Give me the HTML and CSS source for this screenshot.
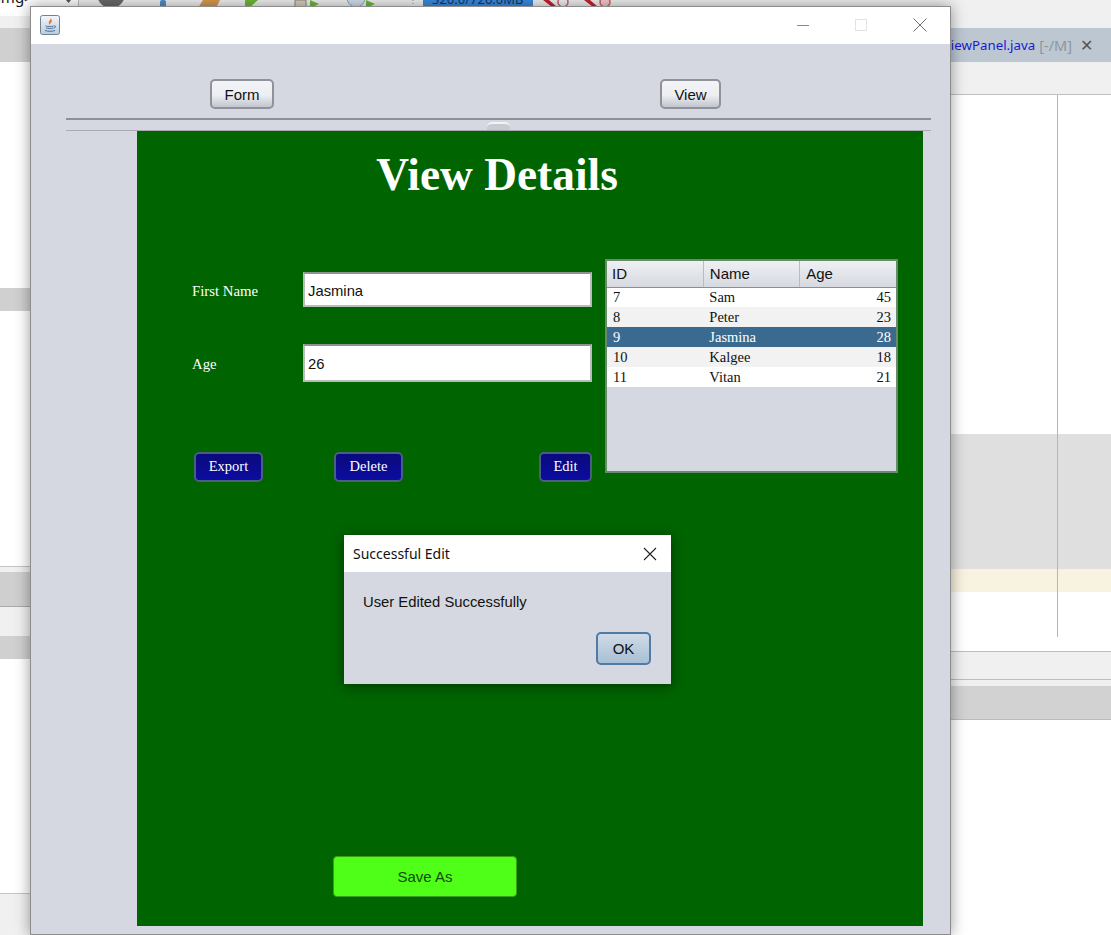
FILE: index.html
```html
<!DOCTYPE html>
<html lang="en">
<head>
    <meta charset="UTF-8">
    <title>View Details</title>
    <link rel="stylesheet" href="styles.css">
</head>
<body>
    <!-- IDE behind the window -->
    <div class="ide">
        <svg class="toolbar" width="1111" height="8" viewBox="0 0 1111 8">
            <rect width="78" height="8" fill="#ffffff"/>
            <text x="-3" y="3" class="tool-text">img&gt;</text>
            <path d="M66 0h5l-2.500 3z" fill="#555"/>
            <rect x="78" width="1" height="8" fill="#bbb"/>
            <circle cx="111" cy="-6" r="14" fill="#6a6a6a"/>
            <rect x="160" width="6" height="8" rx="2" fill="#4a90d0"/>
            <path d="M198 8l5-8h17l-4 8z" fill="#d99a50"/>
            <path d="M245 0h13l-9 8h-4z" fill="#6fb83a"/>
            <rect x="295" width="11" height="8" fill="#d8d2b8" stroke="#888"/>
            <path d="M310 0v8l9-4z" fill="#6fb83a"/>
            <circle cx="356" cy="-2" r="9" fill="#cfe0ee" stroke="#8fa3b5"/>
            <path d="M366 0v8l9-4z" fill="#6fb83a"/>
            <path d="M413 0v8" stroke="#999" stroke-dasharray="1 2"/>
            <rect x="423" width="110" height="6" fill="#3a8ae0"/>
            <text x="432" y="4" class="mem-text">326.0/726.0MB</text>
            <path d="M543 0l9 7h5l-8-7z" fill="#c8202f"/>
            <circle cx="563" cy="2" r="5" fill="none" stroke="#d06070" stroke-width="1.500"/>
            <path d="M584 0l9 7h5l-8-7z" fill="#c8202f"/>
            <circle cx="605" cy="2" r="5" fill="#f4c8cc" stroke="#d06070" stroke-width="1.500"/>
        </svg>
        <div class="ide-cols">
            <div class="ide-left">
                <div class="l-a"></div>
                <div class="l-b"></div>
                <div class="l-c"></div>
                <div class="l-d"></div>
                <div class="l-e"></div>
                <div class="l-f"></div>
                <div class="l-g"></div>
                <div class="l-h"></div>
                <div class="l-i"></div>
                <div class="l-j"></div>
            </div>
            <div class="ide-right">
                <div class="r-a"></div>
                <div class="r-tab"><span class="r-file">ViewPanel.java</span> <span class="r-flag">[-/M]</span><span class="r-close">✕</span></div>
                <div class="r-b"></div>
                <div class="r-c"></div>
                <div class="r-d"></div>
                <div class="r-e"></div>
                <div class="r-f"></div>
                <div class="r-g"></div>
                <div class="r-h"></div>
                <div class="r-i"></div>
                <div class="r-j"></div>
            </div>
        </div>
        <div class="margin-line"></div>
    </div>

    <div class="window">
        <div class="titlebar">
            <svg class="java-icon" width="20" height="20" viewBox="0 0 20 20">
                <defs>
                    <linearGradient id="ji" x1="0" y1="0" x2="0" y2="1">
                        <stop offset="0" stop-color="#f4f7fa"/>
                        <stop offset="1" stop-color="#b9cbdc"/>
                    </linearGradient>
                </defs>
                <rect x="0.500" y="0.500" width="19" height="19" rx="2" fill="url(#ji)" stroke="#6f8296"/>
                <path d="M10.500 3c1 2-2.500 3-1.500 5.500.4 1 1 1.500 1 1.500-.4-1.500 2.500-3 1.700-5-.2-.7-.7-1.400-1.200-2z" fill="#e2762a"/>
                <path d="M12.500 6c-1 1-1.500 2-1 3.500-.5-1 0-2.500 1-3.500z" fill="#e2762a"/>
                <path d="M5.500 11c2 .7 6 .7 8 0M6 13c2 .6 5.500.6 7.500 0M5 15.500c2.500 1 7.500 1 10 0" fill="none" stroke="#4a6f96" stroke-width="1"/>
                <path d="M14 11c2-.6 2.200 1.600 0 2" fill="none" stroke="#4a6f96"/>
            </svg>
            <div class="win-btns">
                <svg width="12" height="12" viewBox="0 0 12 12"><path d="M0 6.500h12" stroke="#8a8a8a"/></svg>
                <svg width="12" height="12" viewBox="0 0 12 12"><rect x="0.500" y="0.500" width="11" height="11" fill="none" stroke="#e3e3e3"/></svg>
                <svg width="14" height="14" viewBox="0 0 14 14"><path d="M0.500 0.500l13 13M13.500 0.500l-13 13" stroke="#707070"/></svg>
            </div>
        </div>

        <div class="content">
            <div class="tabs">
                <button class="btn btn-form">Form</button>
                <button class="btn btn-view">View</button>
            </div>
            <div class="divider"><span class="grip"></span></div>

            <div class="green">
                <h1 class="heading">View Details</h1>
                <div class="main">
                    <div class="form">
                        <div class="field">
                            <label class="field-label">First Name</label>
                            <div class="input input-name">Jasmina</div>
                        </div>
                        <div class="field">
                            <label class="field-label">Age</label>
                            <div class="input input-age">26</div>
                        </div>
                        <div class="actions">
                            <button class="navy navy-export">Export</button>
                            <button class="navy navy-delete">Delete</button>
                            <button class="navy navy-edit">Edit</button>
                        </div>
                    </div>
                    <div class="table-wrap">
                        <table class="grid">
                            <thead>
                                <tr><th>ID</th><th>Name</th><th>Age</th></tr>
                            </thead>
                            <tbody>
                                <tr><td>7</td><td>Sam</td><td class="num">45</td></tr>
                                <tr class="alt"><td>8</td><td>Peter</td><td class="num">23</td></tr>
                                <tr class="selected"><td>9</td><td>Jasmina</td><td class="num">28</td></tr>
                                <tr class="alt"><td>10</td><td>Kalgee</td><td class="num">18</td></tr>
                                <tr><td>11</td><td>Vitan</td><td class="num">21</td></tr>
                            </tbody>
                        </table>
                    </div>
                </div>
                <button class="save">Save As</button>

                <div class="dialog">
                    <div class="dialog-title">
                        <span>Successful Edit</span>
                        <svg width="14" height="14" viewBox="0 0 14 14"><path d="M1 1l12 12M13 1L1 13" stroke="#222" stroke-width="1.100"/></svg>
                    </div>
                    <div class="dialog-body">
                        <div class="dialog-msg">User Edited Successfully</div>
                        <button class="ok">OK</button>
                    </div>
                </div>
            </div>
        </div>
    </div>
</body>
</html>
```

FILE: styles.css
```css
html, body {
    margin: 0;
    height: 935px;
    overflow: hidden;
}
body {
    position: relative;
    background-color: #ffffff;
    font-family: "Liberation Sans", Arial, sans-serif;
}

/* ide behind */
.ide {
    height: 935px;
    background-color: #f0f0f0;
}
.toolbar {
    display: block;
}
.tool-text {
    font: 15px "Noto Sans", sans-serif;
    fill: #111;
}
.mem-text {
    font: 13px "Noto Sans", sans-serif;
    fill: #16365c;
}
.ide-cols {
    display: flex;
    justify-content: space-between;
    height: 927px;
}
.ide-left {
    width: 30px;
}
.ide-right {
    width: 160px;
    background-color: #ffffff;
}
.l-a { height: 8px; background-color: #ffffff; }
.l-b { height: 12px; background-color: #f0f0f0; }
.l-c { height: 34px; background-color: #d0d0d0; }
.l-d { height: 226px; background-color: #ffffff; }
.l-e { height: 23px; background-color: #d0d0d0; }
.l-f { height: 255px; background-color: #ffffff; border-bottom: 1px solid #c4c4c4; }
.l-g { height: 5px; background-color: #f0f0f0; }
.l-h { height: 34px; background-color: #cfcfcf; border-bottom: 1px solid #aaa; }
.l-i { height: 29px; background-color: #f0f0f0; }
.l-j { height: 257px; background-color: #ffffff; background-image: linear-gradient(#d0d0d0, #d0d0d0); background-size: 100% 23px; background-repeat: no-repeat; border-bottom: 1px solid #c4c4c4; }

.r-a { height: 20px; background-color: #f0f0f0; }
.r-tab {
    height: 34px;
    background-color: #bcc7d2;
    font: 13.300px/34px "Noto Sans", sans-serif;
    white-space: nowrap;
    display: flex;
    justify-content: flex-end;
    gap: 4px;
    padding-right: 18px;
}
.r-file { color: #1a1ad2; }
.r-flag { color: #8c96a0; font-size: 14.500px; }
.r-close { color: #555; margin-left: 4px; font-size: 16px; }
.r-b { height: 32px; background-color: #f0f0f0; border-bottom: 1px solid #c0c0c0; }
.r-c { height: 339px; background-color: #ffffff; }
.r-d { height: 135px; background-color: #dfdfdf; }
.r-e { height: 23px; background-color: #f8f2e0; }
.r-f { height: 59px; background-color: #ffffff; border-bottom: 1px solid #bdbdbd; }
.r-g { height: 27px; background-color: #f0f0f0; border-bottom: 1px solid #bdbdbd; }
.r-h { height: 6px; background-color: #f0f0f0; }
.r-i { height: 33px; background-color: #d2d2d2; border-bottom: 1px solid #bbb; }
.r-j { height: 215px; background-color: #ffffff; }
.margin-line {
    position: absolute;
    left: 1057px;
    top: 95px;
    width: 1px;
    height: 542px;
    background-color: #c8a8cc;
}

/* java window */
.window {
    position: absolute;
    left: 30px;
    top: 6px;
    width: 919px;
    height: 927px;
    border: 1px solid #8c8c8c;
    display: flex;
    flex-direction: column;
    background-color: #d5d8e0;
    box-shadow: 0 0 14px rgba(0, 0, 0, 0.4);
}
.titlebar {
    height: 37px;
    flex: none;
    box-sizing: border-box;
    background-color: #ffffff;
    display: flex;
    align-items: center;
    justify-content: space-between;
    padding: 0 23px 1px 9px;
}
.win-btns {
    display: flex;
    align-items: center;
    gap: 46px;
}
.content {
    flex: 1;
    display: flex;
    flex-direction: column;
    min-height: 0;
}
.tabs {
    height: 39px;
    flex: none;
    padding-top: 35px;
    display: flex;
    align-items: flex-start;
}
.btn {
    height: 30px;
    padding: 0;
    border: 2px solid #8f929a;
    border-radius: 5px;
    background: linear-gradient(#f3f4f7, #eceef2 55%, #c2c5cd);
    font: 15px "Liberation Sans", sans-serif;
    color: #111;
}
.btn-form {
    width: 64px;
    margin-left: 179px;
}
.btn-view {
    width: 61px;
    margin-left: 386px;
}
.divider {
    position: relative;
    height: 10px;
    flex: none;
    margin: 0 19px 0 35px;
    border-top: 2px solid #8d8f98;
    border-bottom: 1px solid #a8abb3;
}
.grip {
    position: absolute;
    left: 421px;
    top: 2px;
    width: 23px;
    height: 6px;
    border-top: 2px solid #f2f3f5;
    border-radius: 5px 5px 0 0;
    background-color: #c8cbd2;
}
.green {
    position: relative;
    height: 795px;
    flex: none;
    box-sizing: border-box;
    margin: 0 27px 0 106px;
    padding: 0 0 29px 55px;
    display: flex;
    flex-direction: column;
    background-color: #006400;
}
.heading {
    width: 610px;
    height: 128px;
    margin: 0;
    padding-top: 16px;
    box-sizing: border-box;
    text-align: center;
    color: #ffffff;
    font: bold 45.400px/56px "Liberation Serif", "Times New Roman", serif;
}
.main {
    display: flex;
    gap: 13px;
}
.form {
    width: 400px;
    padding-top: 13px;
}
.field {
    display: flex;
    align-items: center;
    margin-bottom: 37px;
}
.field-label {
    width: 111px;
    flex: none;
    box-sizing: border-box;
    padding-top: 4px;
    color: #ffffff;
    font: 14.800px "Liberation Serif", serif;
}
.field + .field .field-label {
    padding-top: 2px;
}
.input {
    flex: 1;
    box-sizing: border-box;
    padding: 3px 0 0 3px;
    background-color: #ffffff;
    border: 2px solid #b9bdb9;
    border-top-color: #8e938e;
    color: #111;
    font-size: 14.800px;
    display: flex;
    align-items: center;
}
.input-name { height: 35px; }
.input-age { height: 38px; padding-top: 1px; }
.actions {
    display: flex;
    margin-top: 70px;
}
.navy {
    height: 30px;
    padding: 0 0 2px;
    border: 2px solid #4a5f80;
    border-radius: 5px;
    background: linear-gradient(#0a0a7c, #0c0ca0);
    color: #ffffff;
    font: 14.500px "Liberation Serif", serif;
}
.navy-export { width: 69px; margin-left: 2px; }
.navy-delete { width: 69px; margin-left: 71px; }
.navy-edit { width: 53px; margin-left: auto; }
.table-wrap {
    width: 293px;
    height: 214px;
    box-sizing: border-box;
    border: 2px solid #6a8a70;
    background-color: #d5d8e0;
}
.grid {
    width: 100%;
    border-collapse: collapse;
    table-layout: fixed;
    color: #111;
}
.grid th {
    height: 26px;
    padding: 0 0 0 5px;
    text-align: left;
    font: normal 15px "Liberation Sans", sans-serif;
    background: linear-gradient(#eef0f3, #d6d9e0);
    border-bottom: 1px solid #8a8d94;
    border-right: 1px solid #b9bcc4;
    box-sizing: border-box;
}
.grid th:last-child {
    border-right: 0;
}
.grid th + th {
    padding-left: 6px;
}
.grid td {
    height: 20px;
    padding: 0 0 0 6px;
    font: 14.500px "Liberation Serif", serif;
    box-sizing: border-box;
}
.grid tbody tr {
    background-color: #ffffff;
}
.grid tbody tr.alt {
    background-color: #f2f2f2;
}
.grid tbody tr.selected {
    background-color: #3a6a8f;
    color: #ffffff;
}
.grid td.num {
    text-align: right;
    padding-right: 5px;
}
.save {
    width: 184px;
    height: 41px;
    margin-top: auto;
    margin-left: 141px;
    padding: 0;
    border: 1px solid #3aa012;
    border-radius: 4px;
    background-color: #50ff18;
    color: #124a0a;
    font: 15px "Liberation Sans", sans-serif;
}

/* message box */
.dialog {
    position: absolute;
    left: 207px;
    top: 404px;
    width: 327px;
    height: 149px;
    display: flex;
    flex-direction: column;
    background-color: #d5d8e0;
    box-shadow: 0 2px 12px rgba(0, 0, 0, 0.45);
}
.dialog-title {
    height: 37px;
    flex: none;
    box-sizing: border-box;
    padding: 0 14px 0 9px;
    display: flex;
    align-items: center;
    justify-content: space-between;
    background-color: #ffffff;
    color: #111;
    font: 14px "Noto Sans", sans-serif;
}
.dialog-body {
    flex: 1;
    padding: 22px 20px 0 19px;
}
.dialog-msg {
    color: #111;
    font-size: 14.800px;
}
.ok {
    display: block;
    width: 55px;
    height: 33px;
    margin: 22px 0 0 auto;
    padding: 0;
    border: 2px solid #4f7ba6;
    border-radius: 5px;
    background: linear-gradient(#cfdbe6, #a8bfd4);
    color: #111;
    font: 15px "Liberation Sans", sans-serif;
}
```
